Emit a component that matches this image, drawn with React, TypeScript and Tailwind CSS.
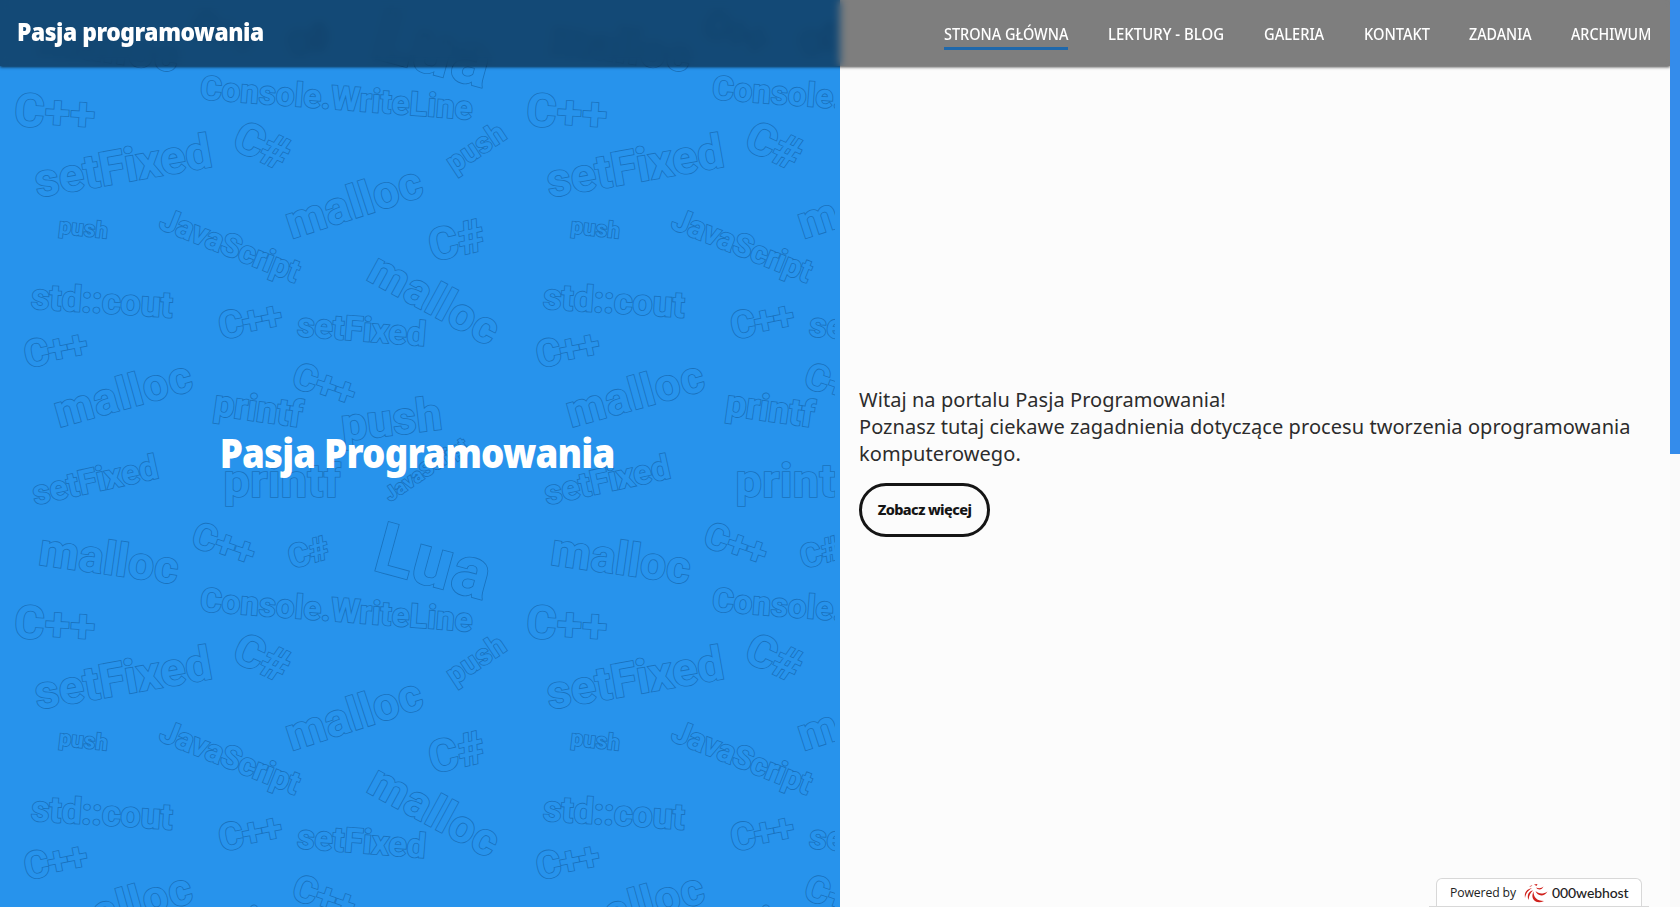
type Word = [text: string, x: number, y: number, angle: number, size: number, length: number];

const TILE = 512;
const WIDTH = 835;
const HEIGHT = 907;

const words: Word[] = [
  ["C++", 13.5, 125.5, 3.5, 46, 81],
  ["Console.WriteLine", 199.5, 99, 4.3, 33, 273],
  ["setFixed", 37.5, 197.5, -10, 47, 179],
  ["C#", 230, 147.7, 25, 45, 56],
  ["malloc", 291.5, 239, -18, 46, 141],
  ["push", 454.3, 173.5, -33.5, 29, 64.6],
  ["C#", 432.5, 261.8, -13, 45, 56],
  ["push", 58.2, 233, 6.4, 22, 49],
  ["JavaScript", 157.5, 228, 21.8, 32, 148],
  ["malloc", 365, 279, 28.6, 46, 141],
  ["std::cout", 30.5, 308.5, 3.6, 36, 142],
  ["C++", 221.3, 339.5, -11, 38, 64],
  ["setFixed", 296.5, 336, 4.4, 34, 129],
  ["C++", 26.8, 368, -11, 38, 64],
  ["malloc", 59, 427.5, -15.6, 45, 141],
  ["C++", 290, 386, 19, 37, 64],
  ["printf", 212.5, 415, 8, 37, 89],
  ["push", 343, 441, -6.8, 46, 101],
  ["setFixed", 35, 505, -12.3, 34, 128],
  ["printf", 223.5, 496.7, 0, 47, 117],
  ["JavaScript", 390, 502, -34, 20, 96],
  ["malloc", 37.5, 564.5, 8, 46, 140],
  ["C++", 189.5, 545.5, 19, 37, 64],
  ["C#", 291.7, 569, -16, 33, 41],
  ["Lua", 371, 569.5, 15.3, 71, 117],
];

const offsets = [-TILE, 0, TILE].flatMap((dy) => [0, TILE].map((dx) => [dx, dy]));

const placed: Word[] = offsets
  .flatMap(([dx, dy]) => words.map(([text, x, y, ...rest]): Word => [text, x + dx, y + dy, ...rest]))
  .filter(([, x, y]) => x < WIDTH && y > -10 && y < HEIGHT + 45);

function WordPattern() {
  return (
    <svg className="absolute top-0 left-0 h-full w-[835px]" aria-hidden="true">
      {placed.map(([text, x, y, angle, size, length]) => (
        <text
          key={`${text}-${x}-${y}`}
          transform={`translate(${x} ${y}) rotate(${angle})`}
          fontSize={size}
          textLength={length}
          fontFamily="Roboto, sans-serif"
          fontWeight={750}
          fill="#2793ec"
          stroke="#1a72bd"
          strokeWidth={1.7}
          paintOrder="stroke"
        >
          {text}
        </text>
      ))}
    </svg>
  );
}

function Header() {
  return (
    <header className="absolute top-0 left-0 z-10 flex h-[66px] w-[1670px] items-center justify-between bg-black/50 pr-[19px] pl-[17px] text-white shadow-[0_1px_3px_rgba(0,0,0,0.75)] backdrop-blur-[4px]">
      <div className="origin-left scale-x-[0.913] pb-1 text-[25px] leading-8 font-black tracking-[-0.5px] whitespace-nowrap">Pasja programowania</div>
      <nav className="flex gap-10 pt-[2px] text-[17px] leading-6 font-medium whitespace-nowrap">
        <a className="w-[124px] border-b-3 border-[#1f68ab] pt-[3px] pb-px">
          <span className="inline-block origin-left scale-x-[0.85]">STRONA GŁÓWNA</span>
        </a>
        <a className="w-[116px] pt-[3px]">
          <span className="inline-block origin-left scale-x-[0.88]">LEKTURY - BLOG</span>
        </a>
        <a className="w-[60px] pt-[3px]">
          <span className="inline-block origin-left scale-x-[0.86]">GALERIA</span>
        </a>
        <a className="w-[65px] pt-[3px]">
          <span className="inline-block origin-left scale-x-[0.86]">KONTAKT</span>
        </a>
        <a className="w-[65px] pt-[3px]">
          <span className="inline-block origin-left scale-x-[0.84]">ZADANIA</span>
        </a>
        <a className="-ml-[3px] w-[80px] pt-[3px]">
          <span className="inline-block origin-left scale-x-[0.84]">ARCHIWUM</span>
        </a>
      </nav>
    </header>
  );
}

function HostBadge() {
  return (
    <div className="absolute right-[31px] bottom-0 flex w-[220px] justify-center border-b border-[#d8d8d8]">
      <div className="flex h-7 w-[206px] items-center rounded-t-md border border-b-0 border-[#d8d8d8] bg-white pl-[13px] text-[#222]">
        <span className="w-[74px] pt-px font-['Open_Sans',sans-serif] text-[12.2px] tracking-[-0.1px] whitespace-nowrap">Powered by</span>
        <svg viewBox="0 0 24 20" className="h-5 w-6" fill="#d0211c">
          <path d="M1 15C0 9 3 6 8 5C4 7.500 2 10 1 15Z" />
          <path d="M4.500 17C2.500 12 5 8 9 7.500C6.500 9.500 5 12 4.500 17Z" />
          <path d="M20 18C11 22 6 15 9.500 8.500C9.500 14 12.500 18 20 18Z" />
          <path d="M23.500 8.500C20 14.500 13 13 11.500 8C14.500 11 19 11.500 23.500 8.500Z" />
          <path d="M19.500 3.500C18 7.500 13.500 7 12 4.500C14.500 5.500 17.500 5.500 19.500 3.500Z" />
          <path d="M5 3.500L8.500 2L7 3.500ZM10 1.500L13.500 1L12.500 3Z" />
        </svg>
        <span className="ml-1 font-['Lato',sans-serif] text-[14px] font-medium tracking-[-0.1px] whitespace-nowrap">000webhost</span>
      </div>
    </div>
  );
}

export default function App() {
  return (
    <div className="relative flex h-[907px] w-[1680px] overflow-hidden bg-[#fcfcfc] font-['Noto_Sans','Open_Sans',sans-serif]">
      <Header />
      <section className="relative flex w-[840px] items-center justify-center bg-[#2793ec]">
        <WordPattern />
        <h1 className="relative mr-1.5 scale-x-[0.918] pb-px text-[40px] leading-none font-black tracking-[-0.9px] whitespace-nowrap text-white">Pasja Programowania</h1>
      </section>
      <main className="flex w-[830px] flex-col items-start justify-center pt-[15px] pl-[19px]">
        <p className="text-[20px] leading-[27px] tracking-[0.06px] whitespace-nowrap text-[#2c2c2c]">
          Witaj na portalu Pasja Programowania!
          <br />
          Poznasz tutaj ciekawe zagadnienia dotyczące procesu tworzenia oprogramowania
          <br />
          komputerowego.
        </p>
        <button className="mt-4 h-[54px] w-[131px] rounded-full border-3 border-[#151515] text-[14.5px] font-extrabold tracking-[-0.6px] whitespace-nowrap text-[#151515]">Zobacz więcej</button>
      </main>
      <div className="relative z-20 w-[10px] bg-[#fafafa]">
        <div className="h-[454px] bg-[#348ceb]" />
      </div>
      <HostBadge />
    </div>
  );
}
